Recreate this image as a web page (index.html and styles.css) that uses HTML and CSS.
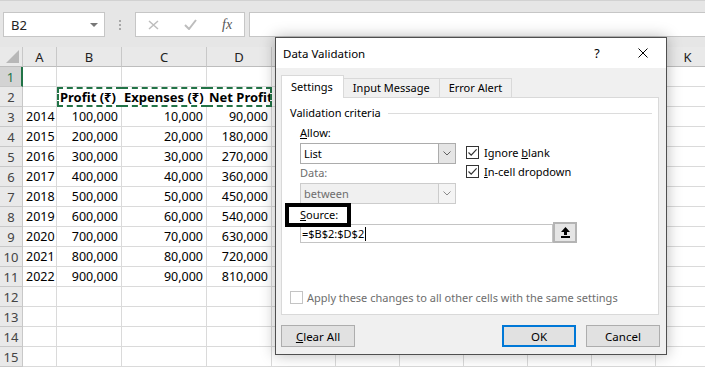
FILE: index.html
```html
<!DOCTYPE html>
<html lang="en">
<head>
  <meta charset="UTF-8">
  <meta name="viewport" content="width=device-width, initial-scale=1.0">
  <title>Data Validation</title>
  <link rel="stylesheet" href="styles.css">
</head>
<body>

  <!-- Formula bar -->
  <div class="formula-bar">
    <div class="name-box">
      <span>B2</span>
      <span class="name-caret"></span>
    </div>
    <div class="grip"><i></i><i></i><i></i></div>
    <div class="fx-box">
      <svg width="11" height="10" viewBox="0 0 11 10"><path d="M1 1 L10 9 M10 1 L1 9" stroke="#bdbdbd" stroke-width="1.5" fill="none"/></svg>
      <svg width="13" height="11" viewBox="0 0 13 11"><path d="M1 6 L5 10 L12 1" stroke="#bdbdbd" stroke-width="2" fill="none"/></svg>
      <span class="fx">fx</span>
    </div>
    <div class="formula-input"></div>
  </div>

  <!-- Sheet (columns E to J sit under the dialog) -->
  <table class="sheet">
    <colgroup>
      <col style="width:23px"><col style="width:34px"><col style="width:65px"><col style="width:85px"><col style="width:65px">
      <col style="width:64px"><col style="width:64px"><col style="width:64px"><col style="width:64px"><col style="width:64px"><col style="width:64px"><col style="width:64px">
    </colgroup>
    <tr class="col-head">
      <th class="corner"><span class="corner-mark"></span></th>
      <th>A</th><th>B</th><th>C</th><th>D</th><th></th><th></th><th></th><th></th><th></th><th></th><th>K</th>
    </tr>
    <tr><th class="row-active">1</th><td></td><td></td><td></td><td></td><td></td><td></td><td></td><td></td><td></td><td></td><td></td></tr>
    <tr><th>2</th><td></td><td class="head ants ants-first">Profit (₹)</td><td class="head ants">Expenses (₹)</td><td class="head ants ants-last">Net Profit</td><td></td><td></td><td></td><td></td><td></td><td></td><td></td></tr>
    <tr><th>3</th><td class="num">2014</td><td class="num">100,000</td><td class="num">10,000</td><td class="num">90,000</td><td></td><td></td><td></td><td></td><td></td><td></td><td></td></tr>
    <tr><th>4</th><td class="num">2015</td><td class="num">200,000</td><td class="num">20,000</td><td class="num">180,000</td><td></td><td></td><td></td><td></td><td></td><td></td><td></td></tr>
    <tr><th>5</th><td class="num">2016</td><td class="num">300,000</td><td class="num">30,000</td><td class="num">270,000</td><td></td><td></td><td></td><td></td><td></td><td></td><td></td></tr>
    <tr><th>6</th><td class="num">2017</td><td class="num">400,000</td><td class="num">40,000</td><td class="num">360,000</td><td></td><td></td><td></td><td></td><td></td><td></td><td></td></tr>
    <tr><th>7</th><td class="num">2018</td><td class="num">500,000</td><td class="num">50,000</td><td class="num">450,000</td><td></td><td></td><td></td><td></td><td></td><td></td><td></td></tr>
    <tr><th>8</th><td class="num">2019</td><td class="num">600,000</td><td class="num">60,000</td><td class="num">540,000</td><td></td><td></td><td></td><td></td><td></td><td></td><td></td></tr>
    <tr><th>9</th><td class="num">2020</td><td class="num">700,000</td><td class="num">70,000</td><td class="num">630,000</td><td></td><td></td><td></td><td></td><td></td><td></td><td></td></tr>
    <tr><th>10</th><td class="num">2021</td><td class="num">800,000</td><td class="num">80,000</td><td class="num">720,000</td><td></td><td></td><td></td><td></td><td></td><td></td><td></td></tr>
    <tr><th>11</th><td class="num">2022</td><td class="num">900,000</td><td class="num">90,000</td><td class="num">810,000</td><td></td><td></td><td></td><td></td><td></td><td></td><td></td></tr>
    <tr><th>12</th><td></td><td></td><td></td><td></td><td></td><td></td><td></td><td></td><td></td><td></td><td></td></tr>
    <tr><th>13</th><td></td><td></td><td></td><td></td><td></td><td></td><td></td><td></td><td></td><td></td><td></td></tr>
    <tr><th>14</th><td></td><td></td><td></td><td></td><td></td><td></td><td></td><td></td><td></td><td></td><td></td></tr>
    <tr><th>15</th><td></td><td></td><td></td><td></td><td></td><td></td><td></td><td></td><td></td><td></td><td></td></tr>
  </table>

  <!-- Data Validation dialog -->
  <div class="dialog">
    <div class="title-bar">
      <span class="title">Data Validation</span>
      <span class="title-btn">?</span>
      <span class="title-btn">
        <svg width="10" height="10" viewBox="0 0 10 10"><path d="M0.5 0.5 L9.5 9.5 M9.5 0.5 L0.5 9.5" stroke="#000" stroke-width="1" fill="none"/></svg>
      </span>
    </div>

    <div class="dialog-body">
      <div class="tabs">
        <span class="tab active">Settings</span>
        <span class="tab">Input Message</span>
        <span class="tab">Error Alert</span>
      </div>

      <div class="panel">
        <div class="group-title"><span>Validation criteria</span><span class="group-line"></span></div>

        <div class="criteria">
          <div class="criteria-left">
            <div class="label"><u>A</u>llow:</div>
            <div class="combo">
              <span class="combo-text">List</span>
              <span class="combo-btn"><svg width="8" height="5" viewBox="0 0 8 5"><path d="M0.5 0.5 L4 4 L7.5 0.5" stroke="#606060" fill="none"/></svg></span>
            </div>
            <div class="label disabled">Data:</div>
            <div class="combo combo-disabled">
              <span class="combo-text">between</span>
              <span class="combo-btn"><svg width="8" height="5" viewBox="0 0 8 5"><path d="M0.5 0.5 L4 4 L7.5 0.5" stroke="#8a8a8a" fill="none"/></svg></span>
            </div>
          </div>
          <div class="criteria-right">
            <div class="check-row">
              <span class="check"><svg width="11" height="11" viewBox="0 0 11 11"><path d="M1.5 5.5 L4.2 8.2 L9.6 2.4" stroke="#333" stroke-width="1.2" fill="none"/></svg></span>
              <span>Ignore <u>b</u>lank</span>
            </div>
            <div class="check-row">
              <span class="check"><svg width="11" height="11" viewBox="0 0 11 11"><path d="M1.5 5.5 L4.2 8.2 L9.6 2.4" stroke="#333" stroke-width="1.2" fill="none"/></svg></span>
              <span><u>I</u>n-cell dropdown</span>
            </div>
          </div>
        </div>

        <div class="source-label"><u>S</u>ource:</div>
        <div class="source-row">
          <div class="source-input">=$B$2:$D$2<span class="caret-line"></span></div>
          <div class="source-btn">
            <svg width="9" height="11" viewBox="0 0 9 11"><path d="M4.5 0 L9 5 L6 5 L6 8 L3 8 L3 5 L0 5 Z" fill="#000"/><rect x="0" y="9" width="9" height="2" fill="#000"/></svg>
          </div>
        </div>

        <div class="apply-row">
          <span class="check check-disabled"></span>
          <span>Apply these changes to all other cells with the same settings</span>
        </div>
      </div>

      <div class="footer">
        <button class="btn"><u>C</u>lear All</button>
        <div class="footer-right">
          <button class="btn btn-default">OK</button>
          <button class="btn">Cancel</button>
        </div>
      </div>
    </div>
  </div>

</body>
</html>
```

FILE: styles.css
```css
body {
  margin: 0;
  width: 705px;
  height: 367px;
  overflow: hidden;
  background: #fff;
  font-family: "Noto Sans", sans-serif;
  position: relative;
}

/* Formula bar */
.formula-bar {
  height: 47px;
  box-sizing: border-box;
  background: #e6e6e6;
  border-top: 1px solid #d2d2d2;
  display: flex;
  align-items: flex-start;
  padding-top: 11px;
}
.name-box {
  margin-left: 3px;
  width: 102px;
  height: 25px;
  box-sizing: border-box;
  background: #fff;
  border: 1px solid #c6c6c6;
  display: flex;
  align-items: center;
  justify-content: space-between;
  padding: 0 6px 0 7px;
  font-size: 13px;
  color: #222;
}
.name-caret {
  width: 0;
  height: 0;
  border-left: 4px solid transparent;
  border-right: 4px solid transparent;
  border-top: 4px solid #777;
}
.grip {
  width: 30px;
  height: 25px;
  display: flex;
  flex-direction: column;
  align-items: center;
  justify-content: center;
  gap: 2px;
}
.grip i {
  width: 2px;
  height: 2px;
  background: #a8a8a8;
}
.fx-box {
  width: 110px;
  height: 25px;
  box-sizing: border-box;
  background: #fff;
  border: 1px solid #c6c6c6;
  display: flex;
  align-items: center;
  gap: 25px;
  padding-left: 12px;
}
.fx {
  font-family: "Liberation Serif", serif;
  font-style: italic;
  font-size: 14px;
  color: #555;
}
.formula-input {
  margin-left: 4px;
  flex: 1;
  height: 25px;
  box-sizing: border-box;
  background: #fff;
  border: 1px solid #c6c6c6;
  border-right: none;
}

/* Sheet */
.sheet {
  border-collapse: separate;
  border-spacing: 0;
  table-layout: fixed;
  width: 720px;
  font-size: 12.5px;
  color: #000;
}
.sheet th,
.sheet td {
  height: 20px;
  padding: 0 3px;
  box-sizing: border-box;
  border-right: 1px solid #dadada;
  border-bottom: 1px solid #dadada;
  white-space: nowrap;
  overflow: hidden;
  line-height: 18px;
}
.sheet th {
  background: #e9e9e9;
  font-weight: normal;
  font-size: 13px;
  color: #444;
  text-align: center;
  padding: 0;
  border-right-color: #c8c8c8;
  border-bottom-color: #c8c8c8;
}
.col-head th {
  color: #222;
  border-bottom-color: #bdbdbd;
}
.corner {
  position: relative;
}
.corner-mark {
  position: absolute;
  right: 3px;
  bottom: 3px;
  width: 13px;
  height: 13px;
  background: #b7b7b7;
  clip-path: polygon(100% 0, 100% 100%, 0 100%);
}
.sheet th.row-active {
  background: #d3d3d3;
  color: #217346;
  border-right: 2px solid #217346;
}
.num {
  text-align: right;
}
.sheet td.num {
  padding-right: 3px;
}
.head {
  font-weight: bold;
  font-size: 13px;
}
.sheet td.ants {
  border-top: 2px dashed #217346;
  border-bottom: 2px dashed #217346;
  border-right: none;
  padding-left: 2px;
  line-height: 16px;
}
.sheet td.ants-first {
  border-left: 2px dashed #217346;
  padding-left: 1px;
}
.sheet td.ants-last {
  border-right: 2px dashed #217346;
}

/* Dialog */
.dialog {
  position: absolute;
  left: 275px;
  top: 37px;
  width: 392px;
  height: 318px;
  box-sizing: border-box;
  border: 1px solid #4f4f4f;
  background: #f0f0f0;
  box-shadow: 0 0 14px rgba(0, 0, 0, 0.28);
  display: flex;
  flex-direction: column;
  font-size: 11px;
  color: #000;
}
.title-bar {
  height: 30px;
  background: #fff;
  display: flex;
  align-items: center;
  padding-left: 7px;
}
.title {
  margin-right: auto;
  font-size: 11.5px;
}
.title-btn {
  width: 46px;
  height: 30px;
  display: flex;
  align-items: center;
  justify-content: center;
  font-size: 12.5px;
}
.dialog-body {
  flex: 1;
  display: flex;
  flex-direction: column;
  padding: 7px 7px 0 5px;
}
.tabs {
  display: flex;
  align-items: flex-end;
  height: 22px;
}
.tab {
  height: 19px;
  box-sizing: border-box;
  border: 1px solid #d9d9d9;
  border-bottom: none;
  border-left: none;
  padding: 0 9px;
  line-height: 18px;
  background: #f0f0f0;
}
.tab.active {
  height: 23px;
  margin-bottom: -1px;
  border-left: 1px solid #d9d9d9;
  background: #fff;
  position: relative;
  z-index: 1;
  padding: 0 10px 0 9px;
  line-height: 22px;
}
.panel {
  height: 218px;
  box-sizing: border-box;
  background: #fff;
  border: 1px solid #d9d9d9;
  padding: 7px 6px 9px 8px;
  display: flex;
  flex-direction: column;
}
.group-title {
  display: flex;
  align-items: center;
  line-height: 16px;
}
.group-line {
  flex: 1;
  height: 1px;
  background: #dcdcdc;
  margin-left: 7px;
}
.criteria {
  display: flex;
  padding-left: 10px;
}
.criteria-left {
  width: 156px;
}
.criteria-right {
  margin-left: 10px;
  padding-top: 19px;
}
.label {
  line-height: 16px;
  margin-top: 4px;
}
.label.disabled {
  color: #6d6d6d;
  margin-top: 1px;
}
.combo {
  margin-top: 2px;
  height: 21px;
  box-sizing: border-box;
  border: 1px solid #acacac;
  background: #fff;
  display: flex;
}
.combo-text {
  flex: 1;
  padding-left: 3px;
  line-height: 19px;
}
.combo-btn {
  width: 16px;
  background: #e5e5e5;
  border-left: 1px solid #acacac;
  display: flex;
  align-items: center;
  justify-content: center;
}
.combo-disabled {
  background: #f0f0f0;
  border-color: #cccccc;
  color: #6d6d6d;
}
.combo-disabled .combo-btn {
  background: #f4f4f4;
  border-left-color: #cccccc;
}
.check-row {
  display: flex;
  align-items: center;
  gap: 5px;
  height: 13px;
  margin-top: 6px;
}
.check {
  width: 13px;
  height: 13px;
  box-sizing: border-box;
  border: 1px solid #333;
  background: #fff;
  display: flex;
  align-items: center;
  justify-content: center;
}
.check-disabled {
  border-color: #c4c4c4;
}
.source-label {
  align-self: flex-start;
  margin: -1px 0 0 -5px;
  height: 24px;
  box-sizing: border-box;
  border: 4px solid #000;
  padding: 0 9px 0 11px;
  line-height: 16px;
  background: #fff;
  position: relative;
  z-index: 1;
}
.source-row {
  display: flex;
  align-items: flex-end;
  margin: -5px 0 0 10px;
}
.source-input {
  width: 253px;
  height: 19px;
  box-sizing: border-box;
  border: 1px solid #c4c4c4;
  padding-left: 1px;
  line-height: 17px;
  display: flex;
  align-items: center;
}
.caret-line {
  width: 1px;
  height: 14px;
  background: #000;
  margin-left: 1px;
}
.source-btn {
  width: 24px;
  height: 21px;
  box-sizing: border-box;
  border: 2px solid #b4b4b4;
  background: #e5e5e5;
  display: flex;
  align-items: center;
  justify-content: center;
}
.apply-row {
  margin-top: auto;
  display: flex;
  align-items: center;
  gap: 4px;
  color: #6d6d6d;
}
.footer {
  display: flex;
  justify-content: space-between;
  padding: 10px 0 0;
}
.footer-right {
  display: flex;
  gap: 10px;
  margin-right: -1px;
}
.btn {
  width: 74px;
  height: 22px;
  box-sizing: border-box;
  border: 1px solid #adadad;
  background: #e1e1e1;
  font-family: "Noto Sans", sans-serif;
  font-size: 11.5px;
  color: #000;
  padding: 0;
}
.btn-default {
  border: 2px solid #0078d7;
}
```
